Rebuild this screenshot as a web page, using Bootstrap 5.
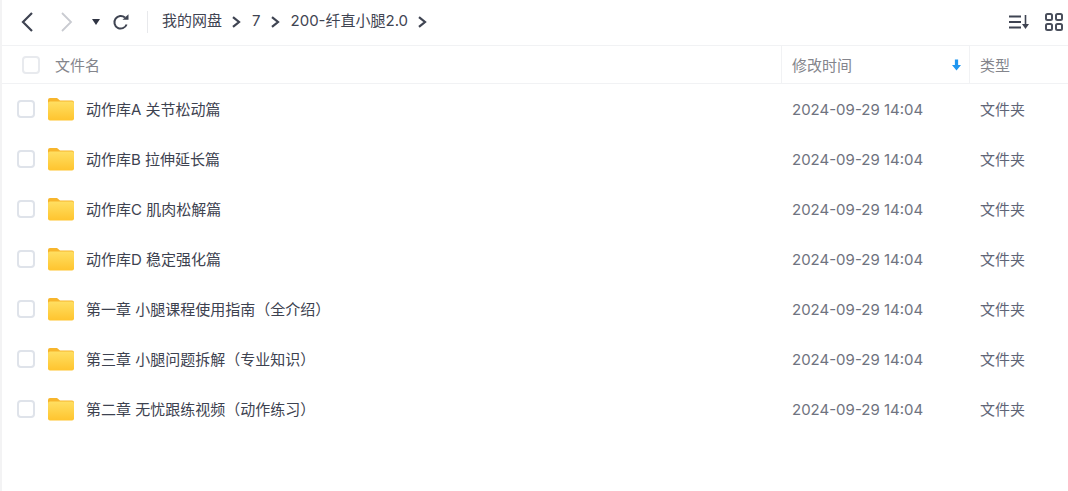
<!DOCTYPE html>
<html lang="zh">
<head>
  <meta charset="UTF-8" />
  <meta name="viewport" content="width=device-width, initial-scale=1.0" />
  <title>我的网盘</title>
  <link href="https://cdn.jsdelivr.net/npm/bootstrap@5.3.3/dist/css/bootstrap.min.css" rel="stylesheet" />
  <style>
    html, body { height: 100%; }
    body {
      background: #fff;
      color: #424e67;
      font-family: Inter, "Noto Sans CJK SC", sans-serif;
      font-size: 15px;
      overflow: hidden;
    }
    .pan-shell { height: 491px; border-left: 2px solid #f3f3f4; }
    .pan-top { height: 46px; padding-left: 17px; padding-right: 5px; padding-bottom: 2px; border-bottom: 1px solid #f1f2f4; }
    .pan-tool { display: block; flex: none; }
    .pan-divider { width: 1px; height: 22px; background: #e8e9ec; margin: 0 14px 0 17px; }
    .pan-crumb { color: #3f4452; white-space: nowrap; }
    .pan-sep { margin: 0 11px 0 10px; flex: none; }
    .pan-head { height: 38px; border-bottom: 1px solid #f1f2f4; color: #84858c; }
    .pan-headtext { padding-top: 3px; }
    .pan-namecol { width: 779px; flex: none; }
    .pan-headname { padding-left: 20px; }
    .pan-datecol { width: 189px; flex: none; padding: 0 10px; }
    .pan-head .pan-datecol { border-left: 1px solid #f1f2f4; border-right: 1px solid #f1f2f4; height: 100%; padding-right: 8px; }
    .pan-typecol { padding-left: 10px; }
    .pan-check { width: 18px; height: 18px; flex: none; border: 2px solid #dfe3ea; border-radius: 4px; background: #fff; }
    .pan-head .pan-check { border-color: #e8eaee; margin-right: 15px; }
    .pan-row { height: 50px; color: #5f6576; }
    .pan-row .pan-namecol { padding-left: 15px; }
    .pan-row .pan-check { margin-right: 13px; }
    .pan-folder { margin-right: 12px; flex: none; }
    .pan-name { color: #3d4250; padding-top: 2px; }
    .pan-row .pan-datecol { padding-left: 11px; padding-top: 2px; }
    .pan-row .pan-typecol { padding-top: 2px; }
    .pan-date { color: #6f7380; white-space: nowrap; }
  </style>
</head>
<body>
  <div class="pan-shell">
    <div class="pan-top d-flex align-items-center">
      <svg class="pan-tool" width="16" height="22" viewBox="0 0 16 22"><path d="M13 2 4 11l9 9" fill="none" stroke="#3f4452" stroke-width="2.2"/></svg>
      <svg class="pan-tool ms-4" width="16" height="22" viewBox="0 0 16 22"><path d="M3 2l9 9-9 9" fill="none" stroke="#c9cbd1" stroke-width="1.8"/></svg>
      <svg class="pan-tool" style="margin-left:16px" width="10" height="8" viewBox="0 0 10 8"><path d="M1 1h8L5 7z" fill="#2f3443"/></svg>
      <svg class="pan-tool" style="margin-left:11px" width="18" height="18" viewBox="0 0 18 18"><path d="M14.6 11.5A6.3 6.3 0 1 1 13 4.6" fill="none" stroke="#3f4452" stroke-width="2"/><path d="M10.5 6.8h6v-5.6z" fill="#3f4452"/></svg>
      <div class="pan-divider"></div>
      <span class="pan-crumb">我的网盘</span>
      <svg class="pan-sep" width="9" height="12" viewBox="0 0 9 12"><path d="M1 1.200 7 6l-6 4.800" fill="none" stroke="#3f4452" stroke-width="2.200"/></svg>
      <span class="pan-crumb">7</span>
      <svg class="pan-sep" width="9" height="12" viewBox="0 0 9 12"><path d="M1 1.200 7 6l-6 4.800" fill="none" stroke="#3f4452" stroke-width="2.200"/></svg>
      <span class="pan-crumb">200-纤直小腿2.0</span>
      <svg class="pan-sep" width="9" height="12" viewBox="0 0 9 12"><path d="M1 1.200 7 6l-6 4.800" fill="none" stroke="#3f4452" stroke-width="2.200"/></svg>
      <svg class="pan-tool ms-auto" width="21" height="16" viewBox="0 0 21 16"><path d="M0 2.500h12M0 8h12M0 13.500h12" stroke="#3f4452" stroke-width="1.800"/><path d="M16.500 1v11" stroke="#3f4452" stroke-width="1.600"/><path d="M13 10h7l-3.500 5z" fill="#3f4452"/></svg>
      <svg class="pan-tool" style="margin-left:15px" width="18" height="18" viewBox="0 0 18 18"><g fill="none" stroke="#4a4f5c" stroke-width="2"><rect x="1" y="1" width="6" height="6" rx="1.500"/><rect x="11" y="1" width="6" height="6" rx="1.500"/><rect x="1" y="11" width="6" height="6" rx="1.500"/><rect x="11" y="11" width="6" height="6" rx="1.500"/></g></svg>
    </div>

    <div class="pan-head d-flex align-items-center">
      <div class="pan-namecol pan-headname d-flex align-items-center">
        <span class="pan-check"></span><span class="pan-headtext">文件名</span>
      </div>
      <div class="pan-datecol d-flex align-items-center justify-content-between">
        <span class="pan-headtext">修改时间</span>
        <svg width="9" height="12" viewBox="0 0 10 12"><path d="M3.200 0h3.600v6H10L5 12 0 6h3.200z" fill="#1e96f0"/></svg>
      </div>
      <div class="pan-typecol pan-headtext">类型</div>
    </div>

    <div id="rows"></div>
  </div>

  <svg width="0" height="0" class="d-block">
    <defs>
      <linearGradient id="folderFill" x1="0" y1="0" x2="0" y2="1">
        <stop offset="0" stop-color="#ffdf62"/>
        <stop offset="1" stop-color="#ffc42e"/>
      </linearGradient>
    </defs>
  </svg>

  <script>
    const nombres = [
      "动作库A 关节松动篇",
      "动作库B 拉伸延长篇",
      "动作库C 肌肉松解篇",
      "动作库D 稳定强化篇",
      "第一章 小腿课程使用指南（全介绍）",
      "第三章 小腿问题拆解（专业知识）",
      "第二章 无忧跟练视频（动作练习）"
    ];

    const carpeta = `<svg class="pan-folder" width="26" height="24" viewBox="0 0 26 24">
      <path d="M0 3a2 2 0 0 1 2-2h7l3 2.500h12a2 2 0 0 1 2 2v5H0z" fill="#f7b52c"/>
      <rect y="4.500" width="26" height="19" rx="2" fill="url(#folderFill)"/>
    </svg>`;

    document.getElementById("rows").innerHTML = nombres.map(n => `
      <div class="pan-row d-flex align-items-center">
        <div class="pan-namecol d-flex align-items-center">
          <span class="pan-check"></span>${carpeta}<span class="pan-name">${n}</span>
        </div>
        <div class="pan-datecol pan-date">2024-09-29 14:04</div>
        <div class="pan-typecol">文件夹</div>
      </div>`).join("");
  </script>
  <script src="https://cdn.jsdelivr.net/npm/bootstrap@5.3.3/dist/js/bootstrap.bundle.min.js"></script>
</body>
</html>
